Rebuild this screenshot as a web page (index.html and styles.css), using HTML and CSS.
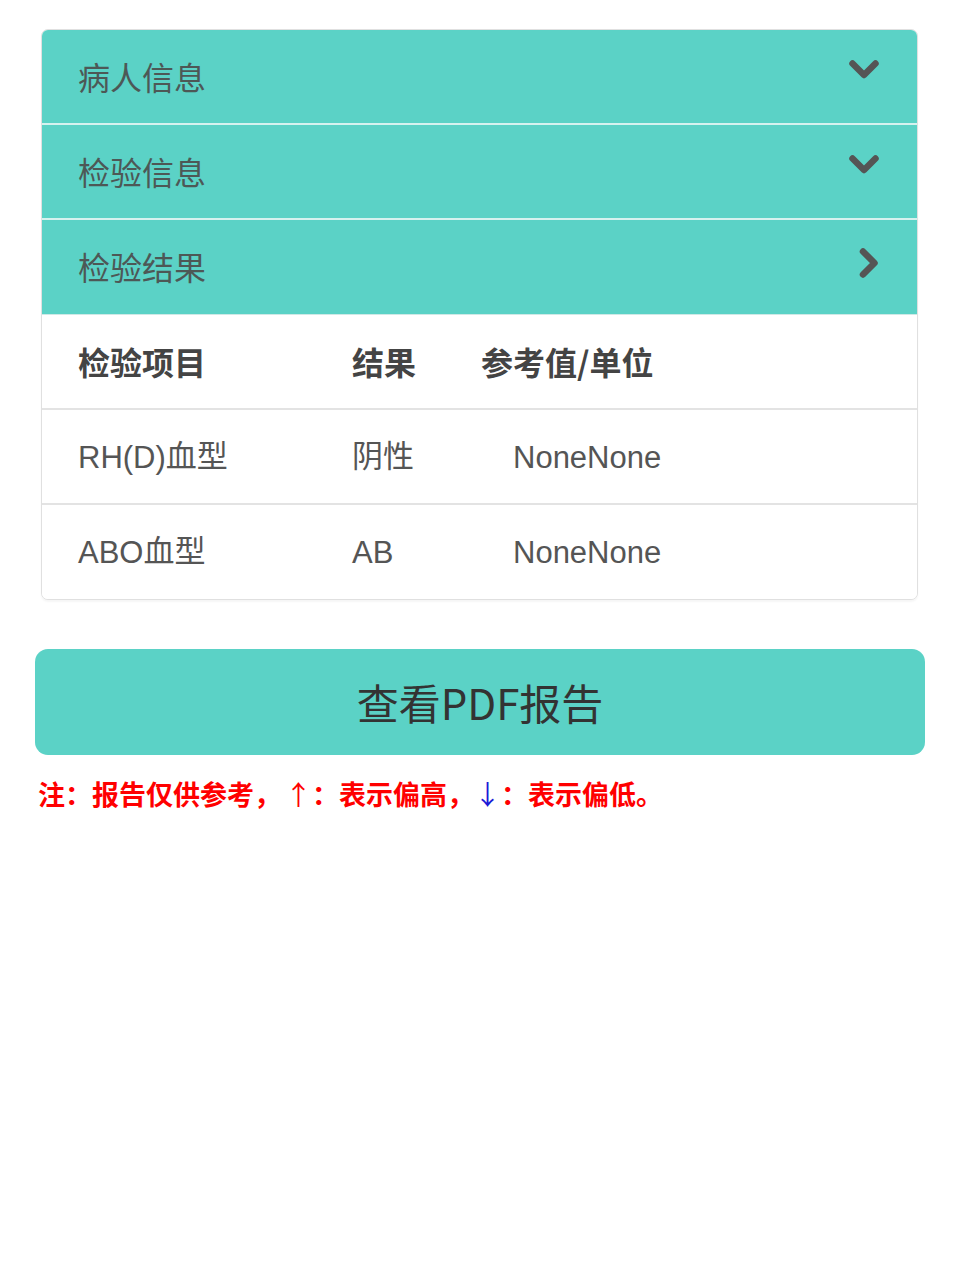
FILE: index.html
```html
<!DOCTYPE html>
<html lang="zh-CN">
<head>
<meta charset="utf-8">
<title>检验报告</title>
<link rel="stylesheet" href="styles.css">
</head>
<body>
<div class="page">
  <div class="panel-group">
    <div class="panel-heading">
      <span class="panel-title">病人信息</span>
      <svg class="chev" width="30" height="22" viewBox="0 0 30 22"><path d="M3.5 4.5 L15 16 L26.5 4.5" fill="none" stroke="#555" stroke-width="6.5" stroke-linecap="round" stroke-linejoin="round"/></svg>
    </div>
    <div class="panel-heading">
      <span class="panel-title">检验信息</span>
      <svg class="chev" width="30" height="22" viewBox="0 0 30 22"><path d="M3.5 4.5 L15 16 L26.5 4.5" fill="none" stroke="#555" stroke-width="6.5" stroke-linecap="round" stroke-linejoin="round"/></svg>
    </div>
    <div class="panel-heading last">
      <span class="panel-title">检验结果</span>
      <svg class="chev chev-right" width="22" height="30" viewBox="0 0 22 30"><path d="M5 3.5 L16.5 15 L5 26.5" fill="none" stroke="#555" stroke-width="6.5" stroke-linecap="round" stroke-linejoin="round"/></svg>
    </div>
    <div class="panel-body">
      <div class="trow thead">
        <div class="c1">检验项目</div>
        <div class="c2">结果</div>
        <div class="c3">参考值/单位</div>
      </div>
      <div class="trow">
        <div class="c1">RH(D)<span class="cjk">血型</span></div>
        <div class="c2"><span class="cjk">阴性</span></div>
        <div class="c3 val">NoneNone</div>
      </div>
      <div class="trow">
        <div class="c1">ABO<span class="cjk">血型</span></div>
        <div class="c2">AB</div>
        <div class="c3 val">NoneNone</div>
      </div>
    </div>
  </div>
  <div class="btn">查看PDF报告</div>
  <p class="note">注：报告仅供参考，<span class="up">↑</span>：表示偏高，<span class="down">↓</span>：表示偏低。</p>
</div>
</body>
</html>
```

FILE: styles.css
```css
html, body {
  margin: 0;
  padding: 0;
  background: #fff;
}
body {
  font-family: "Liberation Sans", "Noto Sans CJK SC", sans-serif;
  color: #555;
}
.page {
  padding: 29px 35px 0 35px;
}
.panel-group {
  margin: 0 7px 0 6px;
  border-radius: 7px;
  border: 1px solid #e0e0e0;
  overflow: hidden;
  background: #fff;
  box-shadow: 0 2px 2px rgba(0, 0, 0, 0.04);
}
.panel-heading {
  height: 93px;
  background: #5bd2c6;
  border-bottom: 2px solid #d6f2ef;
  display: flex;
  align-items: center;
  justify-content: space-between;
  padding: 0 38px 0 36px;
}
.panel-heading.last {
  border-bottom: 1px solid #cfe9e6;
  height: 94px;
}
.panel-title {
  font-family: "Noto Sans CJK SC", sans-serif;
  font-size: 32px;
  color: #4d5856;
  position: relative;
  top: -1px;
}
.chev {
  display: block;
  position: relative;
  top: -7px;
}
.chev-right {
  top: -4px;
  margin-right: -1px;
}
.panel-body {
  background: #fff;
}
.trow {
  display: flex;
  align-items: center;
  height: 93px;
  border-bottom: 2px solid #e3e3e3;
  padding-left: 36px;
  font-size: 31px;
  line-height: 40px;
  color: #555;
}
.trow:last-child {
  border-bottom: none;
  height: 94px;
}
.trow .c1, .trow .c2, .trow .c3 {
  position: relative;
  top: 1px;
}
.thead .c1, .thead .c2, .thead .c3 {
  top: -1px;
}
.cjk {
  position: relative;
  top: -1px;
}
.thead {
  font-family: "Noto Sans CJK SC", sans-serif;
  font-weight: bold;
  color: #444;
  font-size: 32px;
}
.c1 {
  width: 274px;
}
.c2 {
  width: 129px;
}
.c3.val {
  padding-left: 32px;
}
.btn {
  margin-top: 49px;
  height: 106px;
  border-radius: 13px;
  background: #5bd2c6;
  display: flex;
  align-items: center;
  justify-content: center;
  font-family: "Noto Sans CJK SC", sans-serif;
  font-size: 42px;
  color: #333;
  padding-bottom: 2px;
  box-sizing: border-box;
}
.note {
  margin: 19px 0 0 3px;
  font-family: "Noto Sans CJK SC", sans-serif;
  font-weight: bold;
  font-size: 27px;
  color: #f00;
  line-height: 40px;
}
.up {
  color: #f00;
  font-weight: normal;
  margin-left: 4px;
}
.down {
  color: #1a1ad6;
  font-weight: normal;
  margin-left: 0;
}
```
